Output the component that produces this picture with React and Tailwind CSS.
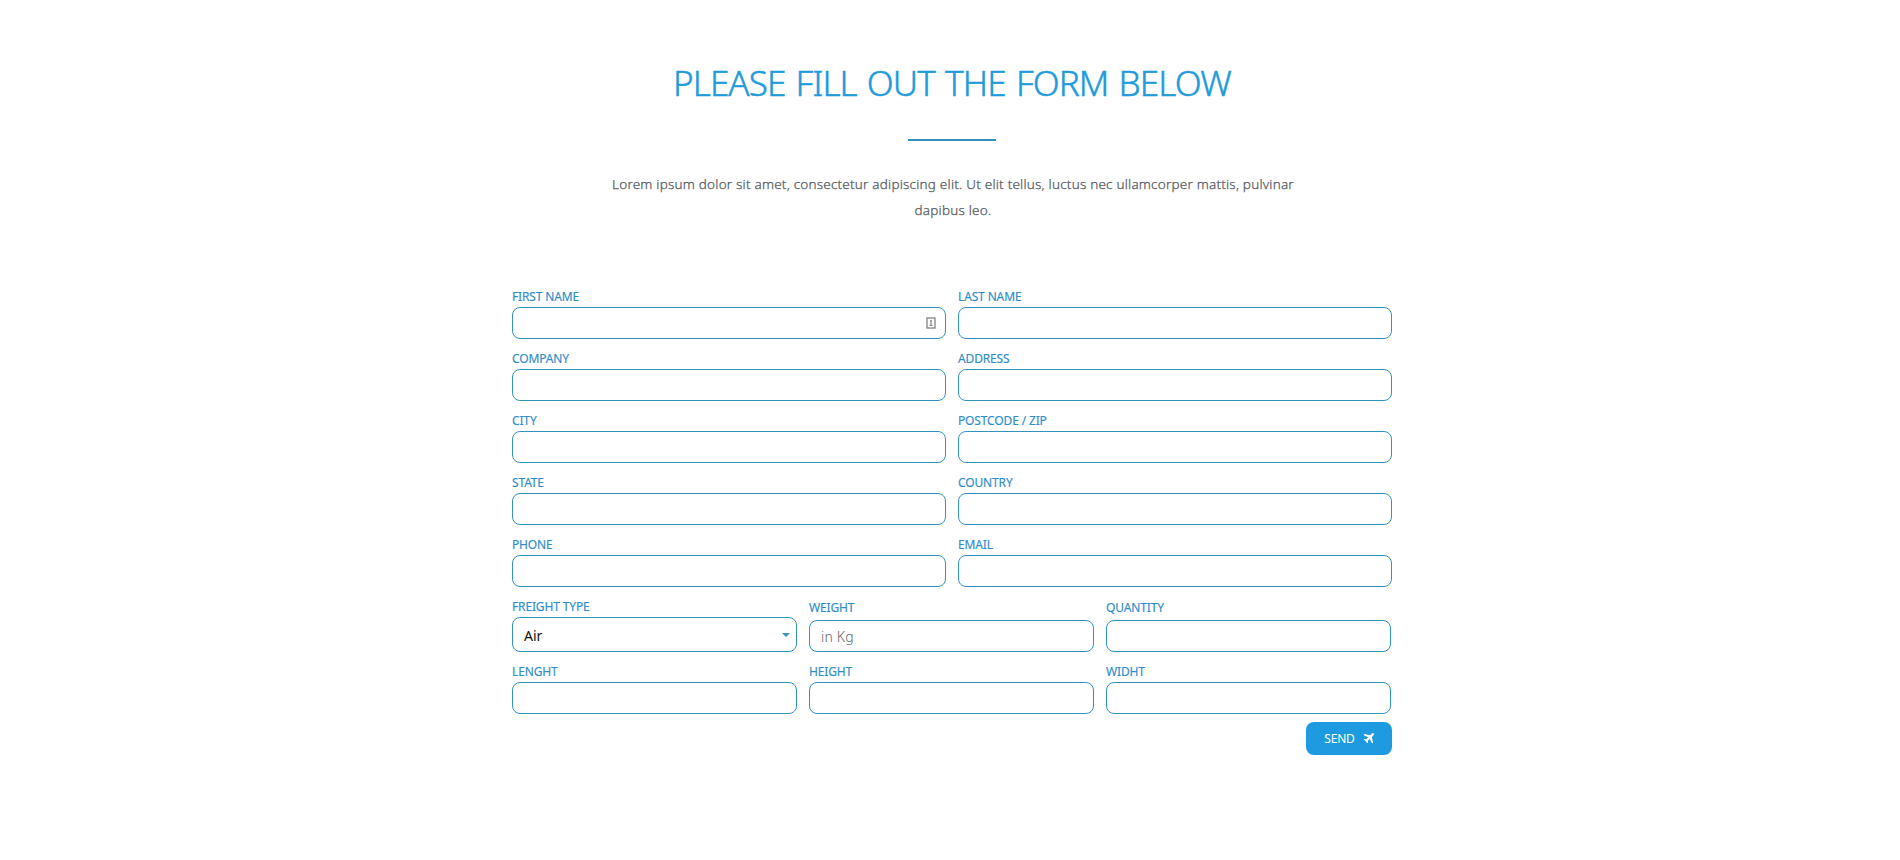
import React from 'react';

const inputClass =
  'block w-full h-8 rounded-lg border border-[#3393bd] bg-white px-[11px] text-[14px] font-light tracking-[0.2px] text-[#222] placeholder:text-[#666] outline-none';

function Label({ children }) {
  return (
    <span className="block h-[30px] pt-[11px] text-[12px] leading-[18px] tracking-[-0.14px] text-[#2f8dca] [-webkit-text-stroke:0.15px_#2f8dca] whitespace-nowrap">{children}</span>
  );
}

function Field({ label, placeholder, icon }) {
  return (
    <label className="block">
      <Label>{label}</Label>
      <span className="relative block">
        <input className={inputClass} placeholder={placeholder} />
        {icon}
      </span>
    </label>
  );
}

function ContactIcon() {
  return (
    <svg className="absolute right-[10px] top-[10px]" width="10" height="12" viewBox="0 0 10 12" fill="none">
      <rect x="1" y="1" width="8" height="10" stroke="#8a8a8a" strokeWidth="1.4" />
      <circle cx="5" cy="4" r="1.1" fill="#8a8a8a" />
      <path d="M5 5v3M3.5 8.3h3" stroke="#8a8a8a" strokeWidth="1.2" />
    </svg>
  );
}

function PlaneIcon() {
  return (
    <svg width="11" height="11" viewBox="0 0 12 12" fill="#fff">
      <path d="M11.6.4c-.6-.6-1.6-.3-2.2.3L7.7 2.4 1.6 1 .5 2.1l4.9 2.6-1.9 2-1.7-.2-.9.9 2.2 1.5 1.5 2.2.9-.9-.2-1.7 2-1.9 2.6 4.9L11 10.4 9.600 4.300l1.700-1.700c.6-.6.9-1.600.3-2.200z" />
    </svg>
  );
}

const pairs = [
  ['FIRST NAME', 'LAST NAME'],
  ['COMPANY', 'ADDRESS'],
  ['CITY', 'POSTCODE / ZIP'],
  ['STATE', 'COUNTRY'],
  ['PHONE', 'EMAIL'],
];

export default function App() {
  return (
    <main className="min-h-[860px] bg-white font-['Noto_Sans','Open_Sans',sans-serif]">
      <div className="ml-[512px] w-[880px]">
        <header className="flex flex-col items-center pt-[59px] text-center">
          <h1 className="h-[80px] whitespace-nowrap text-[35px] font-light leading-[48px] tracking-[-0.9px] [word-spacing:2px] text-[#219bdb] [-webkit-text-stroke:0.5px_#219bdb]">
            PLEASE FILL OUT THE FORM BELOW
          </h1>
          <div className="h-[2px] w-[88px] bg-[#3393bd]" />
          <p className="mt-[30px] w-[700px] pl-[2px] text-[13.5px] font-light leading-[26px] tracking-[0.21px] text-[#54595f] [-webkit-text-stroke:0.25px_#54595f]">
            Lorem ipsum dolor sit amet, consectetur adipiscing elit. Ut elit tellus, luctus nec ullamcorper mattis, pulvinar dapibus leo.
          </p>
        </header>
        <form className="mt-[54px]">
          <div className="grid grid-cols-2 gap-x-3">
            {pairs.flat().map((label) => (
              <Field key={label} label={label} icon={label === 'FIRST NAME' ? <ContactIcon /> : null} />
            ))}
          </div>
          <div className="grid w-[879px] grid-cols-3 gap-x-3">
            <label className="block">
              <Label>FREIGHT TYPE</Label>
              <span className="relative block">
                <select className="block h-[35px] w-full appearance-none rounded-lg border border-[#3393bd] bg-white px-[11px] pt-px text-[14px] text-[#111] outline-none">
                  <option>Air</option>
                </select>
                <svg className="pointer-events-none absolute right-[7px] top-[16px]" width="8" height="4" viewBox="0 0 8 4" fill="#3393bd">
                  <path d="M0 0h8L4 4z" />
                </svg>
              </span>
            </label>
            <div className="pt-[2px] [&_label>span:first-child]:-mt-px [&_label>span:first-child]:h-8">
              <Field label="WEIGHT" placeholder="in Kg" />
            </div>
            <div className="pt-[2px] [&_label>span:first-child]:-mt-px [&_label>span:first-child]:h-8">
              <Field label="QUANTITY" />
            </div>
            <Field label="LENGHT" />
            <Field label="HEIGHT" />
            <Field label="WIDHT" />
          </div>
          <div className="mt-2 flex justify-end">
            <button type="button" className="flex h-[33px] w-[86px] items-center justify-center gap-2 rounded-lg bg-[#1e9be0] text-[12px] tracking-[-0.2px] text-white">
              SEND
              <PlaneIcon />
            </button>
          </div>
        </form>
      </div>
    </main>
  );
}
